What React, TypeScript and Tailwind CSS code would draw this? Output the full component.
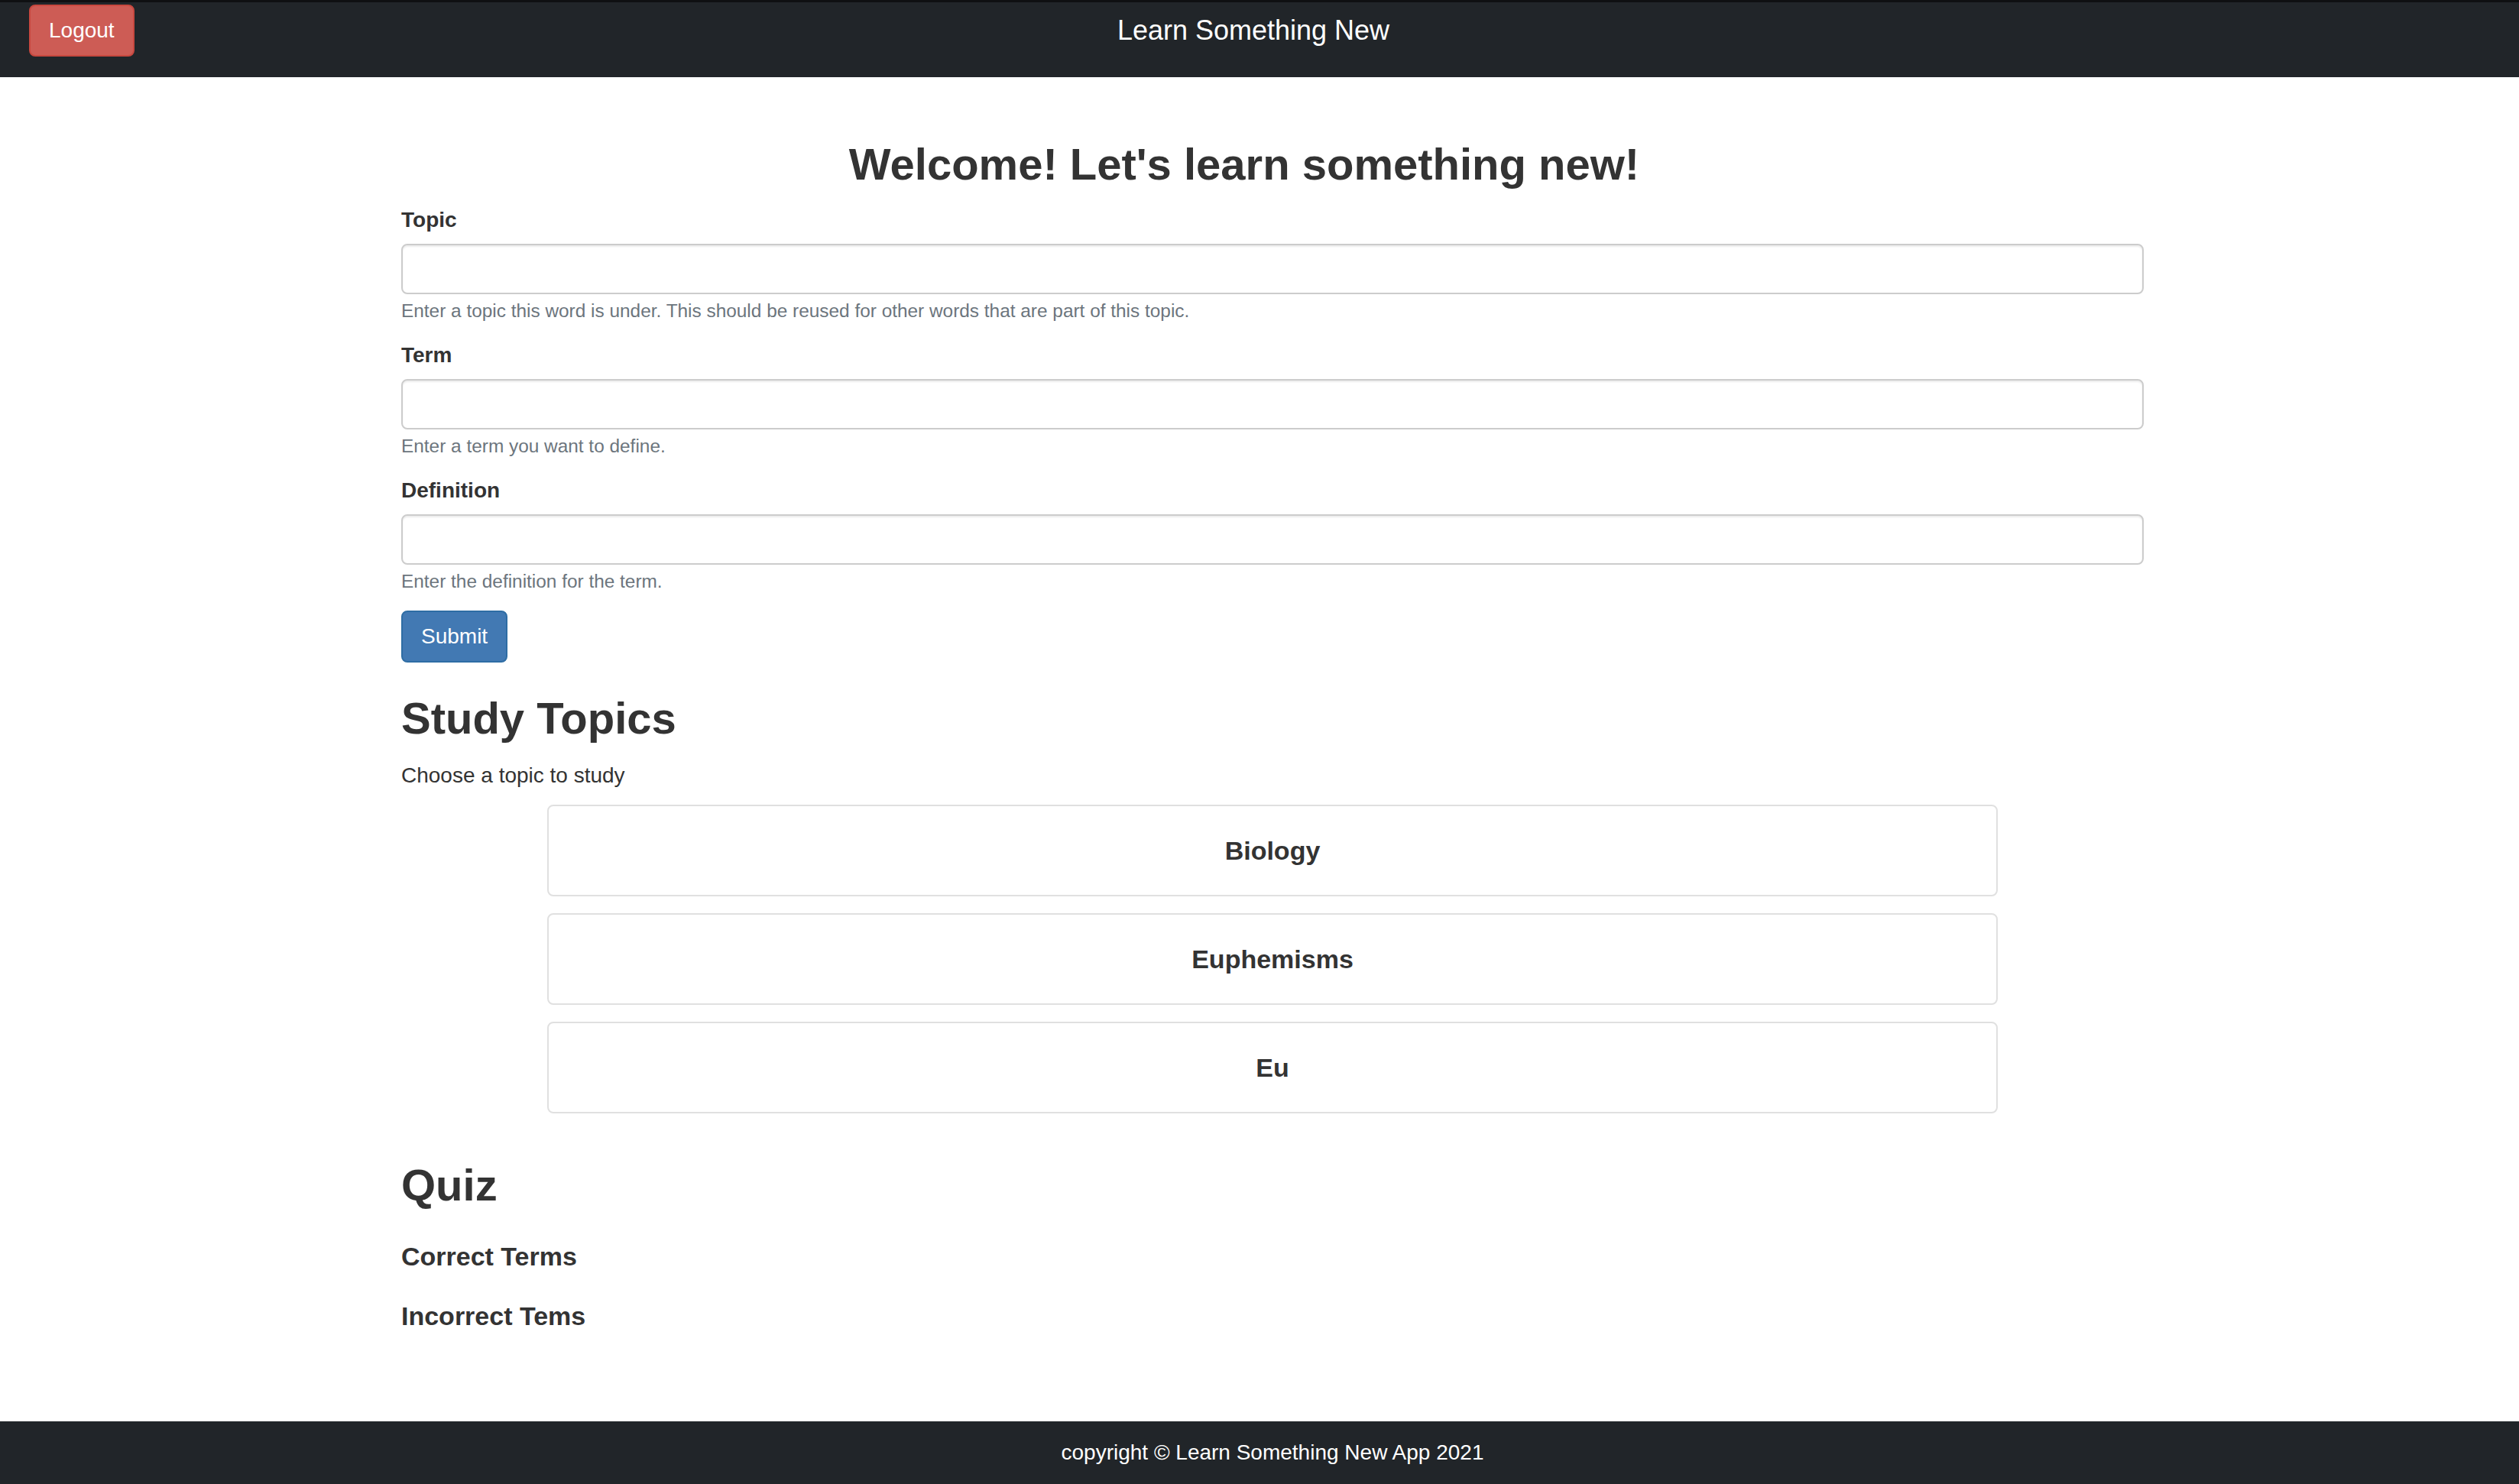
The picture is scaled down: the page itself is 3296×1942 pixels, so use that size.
const fields = [
  { label: "Topic", help: "Enter a topic this word is under. This should be reused for other words that are part of this topic." },
  { label: "Term", help: "Enter a term you want to define." },
  { label: "Definition", help: "Enter the definition for the term." },
]

const topics = ["Biology", "Euphemisms", "Eu"]

export default function App() {
  return (
    <div className="min-h-screen flex flex-col bg-white text-[#333] font-['Liberation_Sans',Arial,sans-serif]">
      {/* Navbar */}
      <nav className="h-[101px] bg-[#212529] border-t-[3px] border-[#0f1012] grid grid-cols-[1fr_auto_1fr]">
        <div className="pl-[38px] pt-[3px]">
          <button className="h-[68px] px-6 rounded-[8px] bg-[#cd5c55] border-2 border-[#c8483f] text-white text-[28px] leading-[40px]">
            Logout
          </button>
        </div>
        <div className="pt-[15px] pr-4 text-white text-[36px] leading-[44px]">Learn Something New</div>
        <div />
      </nav>

      {/* Main */}
      <main className="flex justify-center pl-[34px]">
        <div className="w-[2280px] flex flex-col">
          <h2 className="mt-[81px] pr-[74px] text-center text-[58px] leading-[66px] font-bold">
            Welcome! Let's learn something new!
          </h2>

          <form className="mt-[20px] flex flex-col gap-[21px]" onSubmit={(e) => e.preventDefault()}>
            {fields.map((f) => (
              <div key={f.label} className="flex flex-col">
                <label className="text-[28px] leading-[40px] font-bold mb-[11px]">{f.label}</label>
                <input
                  type="text"
                  className="h-[66px] w-full rounded-[8px] border-2 border-[#cccccc] bg-white px-6 text-[28px] shadow-[inset_0_2px_2px_rgba(0,0,0,0.075)] outline-none"
                />
                <small className="mt-[5px] text-[24.4px] leading-[34px] text-[#6c757d]">{f.help}</small>
              </div>
            ))}
            <div>
              <button
                type="submit"
                className="h-[68px] px-6 rounded-[8px] bg-[#4279b3] border-2 border-[#2e6da4] text-white text-[28px] leading-[40px]"
              >
                Submit
              </button>
            </div>
          </form>

          {/* Study topics */}
          <h2 className="mt-[40px] text-[58px] leading-[66px] font-bold">Study Topics</h2>
          <p className="mt-[22px] text-[28px] leading-[40px]">Choose a topic to study</p>
          <div className="mt-[18px] flex flex-col gap-[22px] items-center">
            {topics.map((t) => (
              <div
                key={t}
                className="w-[1898px] h-[120px] flex items-center justify-center rounded-[8px] border-2 border-[#e0e0e0] bg-white"
              >
                <h4 className="text-[34px] leading-[44px] font-bold">{t}</h4>
              </div>
            ))}
          </div>

          {/* Quiz */}
          <h2 className="mt-[61px] text-[58px] leading-[66px] font-bold">Quiz</h2>
          <h4 className="mt-[38px] text-[34px] leading-[44px] font-bold">Correct Terms</h4>
          <h4 className="mt-[34px] text-[34px] leading-[44px] font-bold">Incorrect Tems</h4>
        </div>
      </main>

      {/* Footer */}
      <footer className="mt-auto h-[82px] bg-[#212529] flex items-center justify-center pl-[34px]">
        <span className="text-white text-[28px] leading-[40px]">copyright © Learn Something New App 2021</span>
      </footer>
    </div>
  )
}
